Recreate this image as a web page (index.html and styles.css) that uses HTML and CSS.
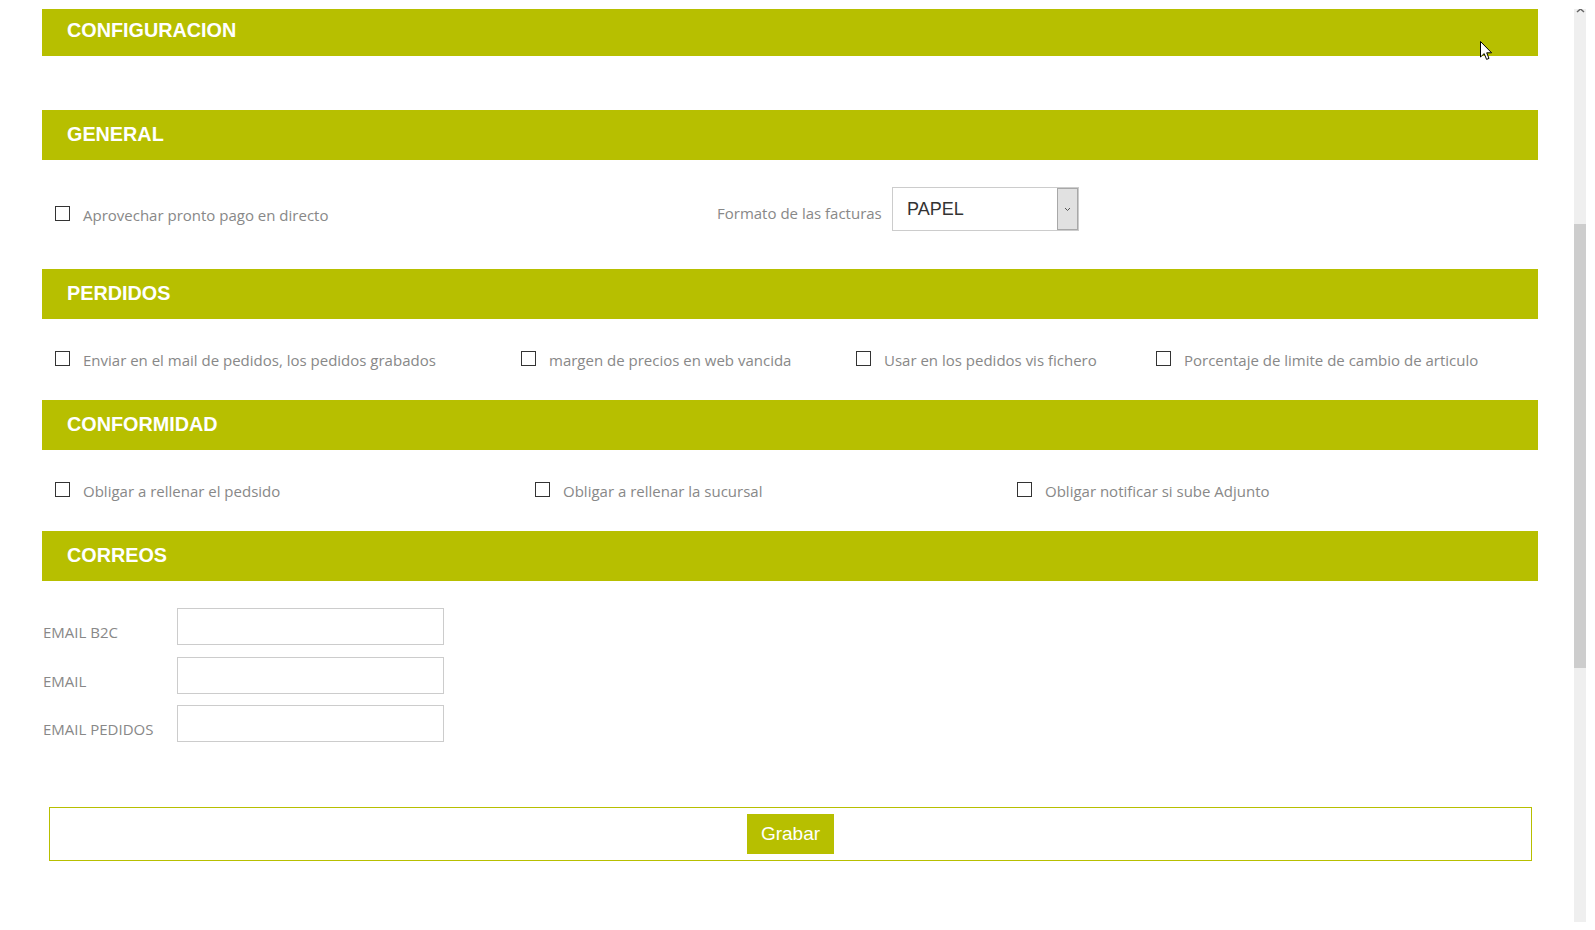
FILE: index.html
```html
<!DOCTYPE html>
<html lang="es">
<head>
<meta charset="utf-8">
<title>Configuracion</title>
<link rel="stylesheet" href="styles.css">
</head>
<body>
<div class="window">
  <div class="content">
    <div class="bar bar-first">CONFIGURACION</div>

    <div class="bar bar-spaced">GENERAL</div>
    <div class="row row-general">
      <label class="check check-general"><span class="box"></span><span class="txt">Aprovechar pronto pago en directo</span></label>
      <span class="field-label">Formato de las facturas</span>
      <div class="select">
        <span class="select-value">PAPEL</span>
        <span class="select-btn">
          <svg width="7" height="5" viewBox="0 0 7 5"><path d="M1 1 L3.5 3.5 L6 1" fill="none" stroke="#555" stroke-width="1"/></svg>
        </span>
      </div>
    </div>

    <div class="bar">PERDIDOS</div>
    <div class="row row-checks row-perdidos">
      <label class="check"><span class="box"></span><span class="txt">Enviar en el mail de pedidos, los pedidos grabados</span></label>
      <label class="check"><span class="box"></span><span class="txt">margen de precios en web vancida</span></label>
      <label class="check"><span class="box"></span><span class="txt">Usar en los pedidos vis fichero</span></label>
      <label class="check"><span class="box"></span><span class="txt">Porcentaje de limite de cambio de articulo</span></label>
    </div>

    <div class="bar">CONFORMIDAD</div>
    <div class="row row-checks row-conformidad">
      <label class="check"><span class="box"></span><span class="txt">Obligar a rellenar el pedsido</span></label>
      <label class="check"><span class="box"></span><span class="txt">Obligar a rellenar la sucursal</span></label>
      <label class="check"><span class="box"></span><span class="txt">Obligar notificar si sube Adjunto</span></label>
    </div>

    <div class="bar">CORREOS</div>
    <div class="emails">
      <div class="email-row"><span class="email-label">EMAIL B2C</span><span class="input"></span></div>
      <div class="email-row"><span class="email-label">EMAIL</span><span class="input"></span></div>
      <div class="email-row"><span class="email-label">EMAIL PEDIDOS</span><span class="input"></span></div>
    </div>

    <div class="actions">
      <button class="btn" type="button">Grabar</button>
    </div>
  </div>
  <div class="scrollbar">
    <svg class="scroll-arrow" width="9" height="5" viewBox="0 0 9 5"><path d="M1 4 L4.5 1 L8 4" fill="none" stroke="#666" stroke-width="1.5"/></svg>
    <div class="thumb"></div>
  </div>
  <svg class="cursor" width="13" height="20" viewBox="0 0 13 20">
    <path d="M0.5 0.5 L0.5 16 L4.2 12.6 L6.6 18.4 L9 17.4 L6.7 11.8 L11.6 11.8 Z" fill="#fff" stroke="#000" stroke-width="1" stroke-linejoin="miter"/>
  </svg>
</div>
</body>
</html>
```

FILE: styles.css
```css
* {
  box-sizing: border-box;
}

html, body {
  background: #ffffff;
}

body {
  margin: 9px;
  font-family: "Open Sans", "Liberation Sans", sans-serif;
}

.window {
  position: relative;
  width: 1578px;
  height: 913px;
  display: flex;
  background: #ffffff;
  overflow: hidden;
  box-shadow: 0 1px 10px rgba(0, 0, 0, 0.55);
}

.content {
  flex: 1;
  padding: 0 36px 0 33px;
}

.bar {
  height: 50px;
  background: #b7bf00;
  color: #ffffff;
  font-family: "Liberation Sans", Arial, sans-serif;
  font-weight: bold;
  font-size: 19.8px;
  letter-spacing: 0;
  padding-left: 25px;
  padding-bottom: 2px;
  display: flex;
  align-items: center;
}

.bar-first {
  height: 47px;
  padding-bottom: 5px;
}

.bar-spaced {
  margin-top: 54px;
}

.row {
  display: grid;
  align-items: start;
  padding-left: 13px;
}

.row-general {
  height: 109px;
  padding-top: 27px;
  grid-template-columns: 662px 175px auto;
}

.check-general {
  margin-top: 19px;
}

.field-label {
  margin-top: 17px;
  font-size: 15px;
  line-height: 18px;
  color: #888888;
}

.select {
  width: 187px;
  height: 44px;
  border: 1px solid #cccccc;
  display: flex;
  align-items: stretch;
  background: #ffffff;
}

.select-value {
  flex: 1;
  padding-left: 14px;
  display: flex;
  align-items: center;
  font-family: "Liberation Sans", Arial, sans-serif;
  font-size: 18px;
  color: #333333;
}

.select-btn {
  width: 21px;
  background: #e1e1e1;
  border: 1px solid #a8a8a8;
  display: flex;
  align-items: center;
  justify-content: center;
}

.row-checks {
  padding-top: 32px;
  padding-bottom: 31px;
}

.row-perdidos {
  grid-template-columns: 466px 335px 300px auto;
}

.row-conformidad {
  grid-template-columns: 480px 482px auto;
}

.check {
  display: flex;
  align-items: flex-start;
  gap: 13px;
  font-size: 15px;
  line-height: 18px;
  color: #888888;
  white-space: nowrap;
}

.box {
  flex: none;
  width: 15px;
  height: 15px;
  border: 1px solid #333333;
  background: #ffffff;
}

.emails {
  padding-top: 27px;
  display: flex;
  flex-direction: column;
  gap: 11.5px;
}

.email-row {
  display: flex;
  align-items: flex-end;
}

.email-label {
  width: 135px;
  font-size: 15px;
  line-height: 20px;
  padding-left: 1px;
  padding-bottom: 3px;
  color: #888888;
}

.input {
  width: 267px;
  height: 37px;
  border: 1px solid #cccccc;
  background: #ffffff;
}

.actions {
  margin: 65px 6px 0 7px;
  height: 54px;
  border: 1px solid #b7bf00;
  padding: 6px 0;
  display: flex;
  justify-content: center;
}

.btn {
  width: 87px;
  height: 40px;
  border: none;
  background: #b7bf00;
  color: #ffffff;
  font-family: "Liberation Sans", Arial, sans-serif;
  font-size: 19px;
  padding: 0;
}

.scrollbar {
  position: relative;
  flex: none;
  width: 13px;
  background: #efefef;
}

.scroll-arrow {
  position: absolute;
  left: 2px;
  top: -1px;
}

.thumb {
  position: absolute;
  left: 0;
  right: 0;
  top: 215px;
  height: 444px;
  background: #cdcdcd;
}

.cursor {
  position: absolute;
  left: 1471px;
  top: 32px;
}
```
